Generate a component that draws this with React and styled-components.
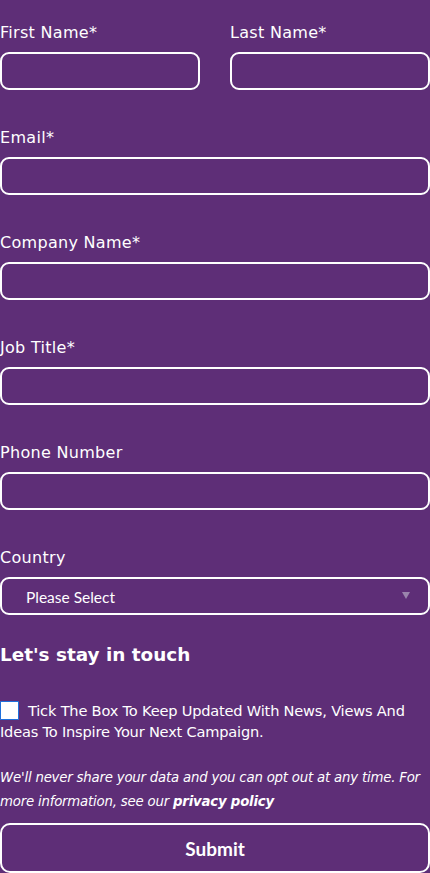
import styled, { createGlobalStyle } from "styled-components";

const GlobalStyle = createGlobalStyle`
  html, body {
    margin: 0;
    padding: 0;
    background: #5e2e77;
  }
  body {
    font-family: "DejaVu Sans", "Open Sans", sans-serif;
    color: #ffffff;
  }
`;

const fields = [
  { label: "Email*" },
  { label: "Company Name*" },
  { label: "Job Title*" },
  { label: "Phone Number" },
];

export default function App() {
  return (
    <>
      <GlobalStyle />
      <Form onSubmit={(e) => e.preventDefault()}>
        <TwoCols>
          <Field>
            <Label>First Name*</Label>
            <Input type="text" />
          </Field>
          <Field>
            <Label>Last Name*</Label>
            <Input type="text" />
          </Field>
        </TwoCols>

        {fields.map((f) => (
          <Field key={f.label}>
            <Label>{f.label}</Label>
            <Input type="text" />
          </Field>
        ))}

        <Field>
          <Label>Country</Label>
          <SelectWrap>
            <Select defaultValue="">
              <option value="">Please Select</option>
            </Select>
            <Arrow />
          </SelectWrap>
        </Field>

        <Heading>Let's stay in touch</Heading>

        <Consent>
          <Checkbox type="checkbox" />
          Tick The Box To Keep Updated With News, Views And Ideas To Inspire
          Your Next Campaign.
        </Consent>

        <Notice>
          We'll never share your data and you can opt out at any time. For
          more information, see our <b>privacy policy</b>
        </Notice>

        <SubmitButton type="submit">Submit</SubmitButton>
      </Form>
    </>
  );
}

const Form = styled.form`
  width: 430px;
  padding-top: 23px;
  display: flex;
  flex-direction: column;
  gap: 38px;
`;

const TwoCols = styled.div`
  display: grid;
  grid-template-columns: 200px 200px;
  column-gap: 30px;
`;

const Field = styled.div`
  display: flex;
  flex-direction: column;
`;

const Label = styled.label`
  font-size: 16px;
  line-height: 20px;
  height: 20px;
  margin-bottom: 9px;
  letter-spacing: 0.3px;
`;

const Input = styled.input`
  box-sizing: border-box;
  width: 100%;
  height: 38px;
  border: 2px solid #ffffff;
  border-radius: 9px;
  background: transparent;
  color: #ffffff;
  padding: 0 12px;
  font-size: 15px;
  outline: none;
`;

const SelectWrap = styled.div`
  position: relative;
`;

const Select = styled.select`
  box-sizing: border-box;
  width: 100%;
  height: 38px;
  border: 2px solid #ffffff;
  border-radius: 9px;
  background: transparent;
  color: #ffffff;
  padding: 2px 0 0 24px;
  font-family: Lato, sans-serif;
  font-size: 15.5px;
  appearance: none;
  outline: none;

  option {
    color: #000;
  }
`;

const Arrow = styled.span`
  position: absolute;
  right: 20px;
  top: 15px;
  width: 0;
  height: 0;
  border-left: 4px solid transparent;
  border-right: 4px solid transparent;
  border-top: 7px solid #9a84ac;
  pointer-events: none;
`;

const Heading = styled.h3`
  margin: -10px 0 -5px;
  font-size: 18.4px;
  line-height: 24px;
  font-weight: 700;
`;

const Consent = styled.label`
  display: block;
  font-size: 14.6px;
  line-height: 21px;
  letter-spacing: -0.2px;
`;

const Checkbox = styled.input`
  appearance: none;
  box-sizing: border-box;
  width: 19px;
  height: 19px;
  margin: 0 9px 0 0;
  vertical-align: -4px;
  background: #ffffff;
  border: 1px solid #1d6fdc;
  border-radius: 1px;
`;

const Notice = styled.p`
  margin: -14px 0 0;
  font-size: 13.3px;
  line-height: 24px;
  font-style: italic;
  letter-spacing: -0.2px;

  b {
    font-weight: 700;
  }
`;

const SubmitButton = styled.button`
  box-sizing: border-box;
  margin-top: -29px;
  width: 100%;
  height: 50px;
  border: 2px solid #ffffff;
  border-radius: 10px;
  background: transparent;
  color: #ffffff;
  font-family: Lato, sans-serif;
  font-size: 19px;
  font-weight: 700;
  cursor: pointer;
`;
